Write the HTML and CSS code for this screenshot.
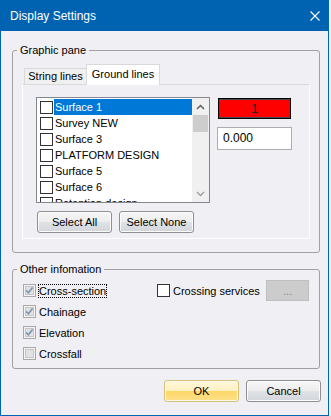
FILE: index.html
```html
<!DOCTYPE html>
<html lang="en">

<head>
    <meta charset="UTF-8">
    <meta name="viewport" content="width=device-width, initial-scale=1.0">
    <title>Display Settings</title>
    <link rel="stylesheet" href="styles.css">
</head>

<body>
    <div class="window">
        <div class="titlebar">
            <span class="title">Display Settings</span>
            <svg class="close" width="10" height="10" viewBox="0 0 10 10">
                <path d="M0.5 0.5 L9.5 9.5 M9.5 0.5 L0.5 9.5" stroke="#fff" stroke-width="1.1" fill="none" />
            </svg>
        </div>

        <div class="client">
            <fieldset class="group graphic">
                <legend>Graphic pane</legend>
                <div class="tabs">
                    <div class="tab first">String lines</div>
                    <div class="tab active">Ground lines</div>
                </div>
                <div class="tab-panel">
                    <div class="panel-row">
                        <div class="listbox">
                            <ul class="items">
                                <li class="item"><span class="cb"></span><span class="item-label selected">Surface 1</span></li>
                                <li class="item"><span class="cb"></span><span class="item-label">Survey NEW</span></li>
                                <li class="item"><span class="cb"></span><span class="item-label">Surface 3</span></li>
                                <li class="item"><span class="cb"></span><span class="item-label">PLATFORM DESIGN</span></li>
                                <li class="item"><span class="cb"></span><span class="item-label">Surface 5</span></li>
                                <li class="item"><span class="cb"></span><span class="item-label">Surface 6</span></li>
                                <li class="item"><span class="cb"></span><span class="item-label">Retention design</span></li>
                            </ul>
                            <div class="scrollbar">
                                <div class="sb-btn">
                                    <svg width="9" height="6" viewBox="0 0 9 6"><path d="M1 5 L4.5 1.5 L8 5" stroke="#606060" stroke-width="1.5" fill="none" /></svg>
                                </div>
                                <div class="sb-thumb"></div>
                                <div class="sb-track"></div>
                                <div class="sb-btn">
                                    <svg width="9" height="6" viewBox="0 0 9 6"><path d="M1 1 L4.5 4.5 L8 1" stroke="#a0a0a0" stroke-width="1.5" fill="none" /></svg>
                                </div>
                            </div>
                        </div>
                        <div class="side">
                            <div class="colour-box">1</div>
                            <div class="textbox">0.000</div>
                        </div>
                    </div>
                    <div class="button-row">
                        <button class="btn">Select All</button>
                        <button class="btn">Select None</button>
                    </div>
                </div>
            </fieldset>

            <fieldset class="group other">
                <legend>Other infomation</legend>
                <div class="other-grid">
                    <div class="check-list">
                        <div class="check-row">
                            <svg class="cb7" width="13" height="13" viewBox="0 0 13 13">
                                <rect x="0.5" y="0.5" width="12" height="12" fill="#f4f4f4" stroke="#a9a9a9" />
                                <rect x="2.5" y="2.5" width="8" height="8" fill="#e2e2e2" stroke="#c6c6c6" />
                                <path d="M3.2 6.4 L5.4 8.8 L9.6 3.4" stroke="#7f95b5" stroke-width="1.7" fill="none" />
                            </svg>
                            <span class="check-label focus">Cross-section</span>
                        </div>
                        <div class="check-row">
                            <svg class="cb7" width="13" height="13" viewBox="0 0 13 13">
                                <rect x="0.5" y="0.5" width="12" height="12" fill="#f4f4f4" stroke="#a9a9a9" />
                                <rect x="2.5" y="2.5" width="8" height="8" fill="#e2e2e2" stroke="#c6c6c6" />
                                <path d="M3.2 6.4 L5.4 8.8 L9.6 3.4" stroke="#7f95b5" stroke-width="1.7" fill="none" />
                            </svg>
                            <span class="check-label">Chainage</span>
                        </div>
                        <div class="check-row">
                            <svg class="cb7" width="13" height="13" viewBox="0 0 13 13">
                                <rect x="0.5" y="0.5" width="12" height="12" fill="#f4f4f4" stroke="#a9a9a9" />
                                <rect x="2.5" y="2.5" width="8" height="8" fill="#e2e2e2" stroke="#c6c6c6" />
                                <path d="M3.2 6.4 L5.4 8.8 L9.6 3.4" stroke="#7f95b5" stroke-width="1.7" fill="none" />
                            </svg>
                            <span class="check-label">Elevation</span>
                        </div>
                        <div class="check-row">
                            <svg class="cb7" width="13" height="13" viewBox="0 0 13 13">
                                <rect x="0.5" y="0.5" width="12" height="12" fill="#f4f4f4" stroke="#a9a9a9" />
                                <rect x="2.5" y="2.5" width="8" height="8" fill="#e2e2e2" stroke="#c6c6c6" />
                            </svg>
                            <span class="check-label">Crossfall</span>
                        </div>
                    </div>
                    <div class="crossing">
                        <span class="cb"></span>
                        <span class="check-label">Crossing services</span>
                        <button class="btn-disabled">...</button>
                    </div>
                </div>
            </fieldset>

            <div class="dialog-buttons">
                <button class="btn ok">OK</button>
                <button class="btn">Cancel</button>
            </div>
        </div>
    </div>
</body>

</html>
```

FILE: styles.css
```css
* {
    box-sizing: border-box;
}

body {
    margin: 0;
    background: #efeff4;
    font-family: "Liberation Sans", Arial, sans-serif;
    font-size: 11px;
    color: #000;
}

.window {
    width: 329px;
    height: 416px;
    border: 1px solid #0063b1;
    border-top: 0;
    background: #efeff4;
    display: flex;
    flex-direction: column;
}

.titlebar {
    height: 31px;
    flex: none;
    background: #0063b1;
    color: #fff;
    font-size: 12px;
    display: flex;
    align-items: center;
    justify-content: space-between;
    padding: 0 8px 0 9px;
}

.client {
    flex: 1;
    display: flex;
    flex-direction: column;
    padding: 12px 8px 0 11px;
}

.group {
    margin: 0;
    padding: 0 9px 13px;
    border: 1px solid #a0a0a0;
    border-radius: 3px;
    min-width: 0;
}

.group legend {
    margin-left: -5px;
    padding: 0 3px;
    line-height: 14px;
}

/* tabs */
.tabs {
    display: flex;
    align-items: flex-end;
    height: 20px;
    margin-top: 7px;
    padding-left: 2px;
}

.tab {
    height: 16px;
    line-height: 15px;
    text-align: center;
    border: 1px solid #d9d9d9;
    border-bottom: 0;
    background: #f0f0f0;
}

.tab.first {
    width: 63px;
}

.tab.active {
    position: relative;
    z-index: 1;
    width: 74px;
    height: 21px;
    line-height: 19px;
    margin-left: -1px;
    margin-bottom: -1px;
    background: #fff;
    border-color: #d9d9d9;
}

.tab-panel {
    border: 1px solid #fff;
    border-top-color: #d9d9d9;
    padding: 12px 0 5px 13px;
}

.panel-row {
    display: flex;
    align-items: flex-start;
}

/* list box */
.listbox {
    width: 174px;
    height: 106px;
    border: 1px solid #828790;
    background: #fff;
    display: flex;
}

.items {
    flex: 1;
    margin: 0;
    padding: 1px 0 0;
    list-style: none;
    overflow: hidden;
}

.item {
    height: 16px;
    display: flex;
    align-items: center;
}

.cb {
    width: 13px;
    height: 13px;
    flex: none;
    border: 1px solid #333;
    background: #fff;
}

.item .cb {
    margin-left: 3px;
    margin-right: 1px;
}

.item-label {
    flex: 1;
    height: 16px;
    line-height: 16px;
    padding-left: 1px;
    white-space: nowrap;
}

.item-label.selected {
    background: #0078d7;
    color: #fff;
}

.scrollbar {
    width: 17px;
    flex: none;
    background: #f0f0f0;
    display: flex;
    flex-direction: column;
}

.sb-btn {
    height: 17px;
    display: flex;
    align-items: center;
    justify-content: center;
}

.sb-thumb {
    height: 17px;
    margin: 0 1px;
    background: #cdcdcd;
}

.sb-track {
    flex: 1;
}

.side {
    margin-left: 7px;
}

.colour-box {
    width: 73px;
    height: 21px;
    margin: 1px 0 0 1px;
    background: #ff0000;
    border: 1px solid #000;
    box-shadow: inset 0 0 0 1px #4a4a4a;
    text-align: center;
    line-height: 19px;
    font-size: 13px;
    color: #222;
}

.textbox {
    width: 75px;
    height: 23px;
    margin-top: 8px;
    border: 1px solid #adadad;
    background: #fff;
    padding-left: 5px;
    line-height: 21px;
    font-size: 12px;
}

/* buttons */
.button-row {
    display: flex;
    gap: 7px;
    margin-top: 8px;
    padding-left: 1px;
}

.btn {
    width: 75px;
    height: 22px;
    padding: 0;
    font: inherit;
    color: #000;
    border: 1px solid #8e8f8f;
    border-radius: 3px;
    background: linear-gradient(#f6f6f6 0%, #ededed 48%, #dfe2e5 52%, #d2d6db 100%);
    box-shadow: inset 0 0 0 1px #fbfbfb;
}

.btn.ok {
    border-color: #d9bf7c;
    background: linear-gradient(#fff8dc 0%, #fff0c0 48%, #fdd768 52%, #fde08a 100%);
    box-shadow: inset 0 0 0 1px #fffbe9;
}

.btn-disabled {
    width: 43px;
    height: 21px;
    margin-left: auto;
    margin-right: 1px;
    padding: 0;
    font: inherit;
    color: #838383;
    background: #cccccc;
    border: 1px solid #bfbfbf;
}

/* other information */
.group.other {
    margin-top: 9px;
    padding-bottom: 4px;
}

.other-grid {
    display: grid;
    grid-template-columns: 135px 1fr;
    padding-top: 4px;
}

.check-row {
    height: 21px;
    display: flex;
    align-items: center;
    padding-left: 1px;
}

.check-label {
    margin-left: 2px;
    border: 1px dotted transparent;
    line-height: 12px;
    white-space: nowrap;
}

.check-label.focus {
    border-color: #000;
}

.crossing {
    height: 21px;
    display: flex;
    align-items: center;
}

.dialog-buttons {
    display: flex;
    justify-content: flex-end;
    gap: 7px;
    margin-top: 11px;
    margin-right: -1px;
}
```
